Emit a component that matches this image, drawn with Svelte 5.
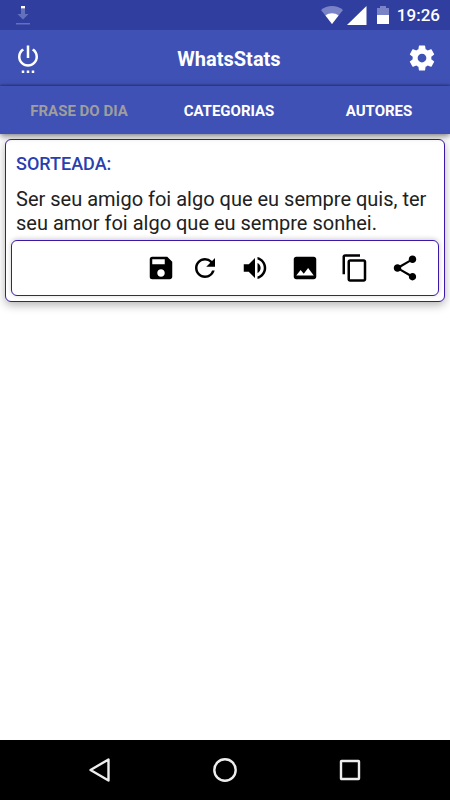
<script lang="ts">
	type Action = { id: string; label: string; path: string };

	const tabs = ['Frase do dia', 'Categorias', 'Autores'];
	let active = $state(0);

	const actions: Action[] = [
		{
			id: 'save',
			label: 'Salvar',
			path: 'M17 3H5a2 2 0 0 0-2 2v14a2 2 0 0 0 2 2h14c1.1 0 2-.9 2-2V7l-4-4zm-5 16c-1.66 0-3-1.34-3-3s1.34-3 3-3 3 1.34 3 3-1.34 3-3 3zm3-10H5V5h10v4z'
		},
		{
			id: 'refresh',
			label: 'Sortear outra',
			path: 'M17.65 6.35A7.958 7.958 0 0 0 12 4c-4.42 0-7.99 3.58-7.99 8s3.57 8 7.99 8c3.73 0 6.84-2.55 7.73-6h-2.08A5.99 5.99 0 0 1 12 18c-3.31 0-6-2.69-6-6s2.69-6 6-6c1.66 0 3.14.69 4.22 1.78L13 11h7V4l-2.35 2.35z'
		},
		{
			id: 'listen',
			label: 'Ouvir',
			path: 'M3 9v6h4l5 5V4L7 9H3zm13.5 3c0-1.77-1.02-3.29-2.5-4.03v8.05c1.48-.73 2.5-2.25 2.5-4.02zM14 3.23v2.06c2.89.86 5 3.54 5 6.71s-2.11 5.85-5 6.71v2.06c4.01-.91 7-4.49 7-8.77s-2.99-7.86-7-8.77z'
		},
		{
			id: 'image',
			label: 'Imagem',
			path: 'M21 19V5c0-1.1-.9-2-2-2H5c-1.1 0-2 .9-2 2v14c0 1.1.9 2 2 2h14c1.1 0 2-.9 2-2zM8.5 13.5l2.5 3.01L14.5 12l4.5 6H5l3.5-4.5z'
		},
		{
			id: 'copy',
			label: 'Copiar',
			path: 'M16 1H4c-1.1 0-2 .9-2 2v14h2V3h12V1zm3 4H8c-1.1 0-2 .9-2 2v14c0 1.1.9 2 2 2h11c1.1 0 2-.9 2-2V7c0-1.1-.9-2-2-2zm0 16H8V7h11v14z'
		},
		{
			id: 'share',
			label: 'Compartilhar',
			path: 'M18 16.08c-.76 0-1.44.3-1.96.77L8.91 12.7c.05-.23.09-.46.09-.7s-.04-.47-.09-.7l7.05-4.11c.54.5 1.25.81 2.04.81 1.66 0 3-1.34 3-3s-1.34-3-3-3-3 1.34-3 3c0 .24.04.47.09.7L8.04 9.81C7.5 9.31 6.79 9 6 9c-1.66 0-3 1.34-3 3s1.34 3 3 3c.79 0 1.5-.31 2.04-.81l7.12 4.16c-.05.21-.08.43-.08.65 0 1.61 1.31 2.92 2.92 2.92s2.92-1.31 2.92-2.92-1.31-2.92-2.92-2.92z'
		}
	];
</script>

<div class="screen">
	<div class="status">
		<svg class="download" width="16" height="22" viewBox="0 0 16 22" aria-hidden="true">
			<path d="M6 5h4v5h3.5L8 15.500 2.500 10H6zM1 19h14v1.500H1z" fill="#6371bd" />
			<path d="M6 2h4v2.500H6z" fill="#fff" />
		</svg>
		<div class="indicators">
			<svg width="22" height="20" viewBox="0 0 22 20" aria-hidden="true">
				<path d="M11 19 0 5C6-.5 16-.5 22 5z" fill="#7983c5" />
				<path d="M11 19 4.500 10.500C8 7.500 14 7.500 17.500 10.500z" fill="#fff" />
			</svg>
			<svg width="20" height="20" viewBox="0 0 20 20" aria-hidden="true">
				<path d="M0 20 19.500 1v19z" fill="#fff" />
			</svg>
			<svg class="battery" width="12" height="20" viewBox="0 0 12 20" aria-hidden="true">
				<path d="M3 1h6v2h3v8H0V3h3z" fill="#7983c5" />
				<path d="M0 10h12v9H0z" fill="#fff" />
			</svg>
			<span>19:26</span>
		</div>
	</div>

	<header>
		<button type="button" class="icon" aria-label="Sair">
			<svg viewBox="0 0 24 24">
				<path d="M7 24h2v-2H7v2zm4 0h2v-2h-2v2zm2-22h-2v10h2V2zm3.560 2.440l-1.450 1.450C16.840 6.940 18 8.830 18 11c0 3.310-2.690 6-6 6s-6-2.690-6-6c0-2.170 1.160-4.060 2.880-5.120L7.440 4.440C5.360 5.880 4 8.280 4 11c0 4.420 3.580 8 8 8s8-3.580 8-8c0-2.720-1.360-5.120-3.440-6.560zM15 24h2v-2h-2v2z" />
			</svg>
		</button>
		<h1>WhatsStats</h1>
		<button type="button" class="icon" aria-label="Configurações">
			<svg viewBox="0 0 24 24">
				<path d="M19.430 12.980c.04-.32.07-.64.07-.98s-.03-.66-.07-.98l2.110-1.650c.19-.15.24-.42.12-.64l-2-3.460c-.12-.22-.39-.3-.61-.22l-2.490 1c-.52-.4-1.080-.73-1.690-.98l-.38-2.650C14.460 2.180 14.250 2 14 2h-4c-.25 0-.46.18-.49.42l-.38 2.650c-.61.25-1.170.59-1.690.98l-2.490-1c-.23-.09-.49 0-.61.22l-2 3.460c-.13.22-.07.49.12.64l2.110 1.650c-.04.32-.07.65-.07.98s.03.66.07.98l-2.110 1.650c-.19.15-.24.42-.12.64l2 3.460c.12.22.39.3.61.22l2.490-1c.52.4 1.080.73 1.690.98l.38 2.650c.03.24.24.42.49.42h4c.25 0 .46-.18.49-.42l.38-2.650c.61-.25 1.170-.59 1.690-.98l2.490 1c.23.09.49 0 .61-.22l2-3.460c.12-.22.07-.49-.12-.64l-2.110-1.650zM12 15.500c-1.930 0-3.500-1.570-3.500-3.500s1.570-3.500 3.500-3.500 3.500 1.570 3.500 3.500-1.570 3.500-3.500 3.500z" />
			</svg>
		</button>
	</header>

	<nav class="tabs">
		{#each tabs as tab, i}
			<button type="button" class:active={i === active} onclick={() => (active = i)}>{tab}</button>
		{/each}
	</nav>

	<main>
		<article class="card">
			<h2>Sorteada:</h2>
			<p>Ser seu amigo foi algo que eu sempre quis, ter seu amor foi algo que eu sempre sonhei.</p>
			<div class="actions">
				{#each actions as action (action.id)}
					<button type="button" class={action.id} aria-label={action.label}>
						<svg viewBox="0 0 24 24"><path d={action.path} /></svg>
					</button>
				{/each}
			</div>
		</article>
	</main>

	<footer>
		<button type="button" aria-label="Voltar">
			<svg viewBox="0 0 24 24"><path d="M20.500 1.500v21L2.500 12z" /></svg>
		</button>
		<button type="button" aria-label="Início">
			<svg viewBox="0 0 24 24"><circle cx="12" cy="12" r="10.700" /></svg>
		</button>
		<button type="button" aria-label="Recentes">
			<svg viewBox="0 0 24 24"><rect x="3" y="3" width="18" height="18" rx="0.500" /></svg>
		</button>
	</footer>
</div>

<style>
	:global(body) {
		margin: 0;
		background: #fff;
	}
	.screen {
		display: flex;
		flex-direction: column;
		min-height: 100vh;
		font-family: Roboto, 'Noto Sans', sans-serif;
		color: #212121;
	}
	svg {
		display: block;
		flex: none;
	}
	button {
		padding: 0;
		border: none;
		background: none;
		color: inherit;
		font: inherit;
		cursor: pointer;
	}
	.status {
		display: flex;
		align-items: center;
		justify-content: space-between;
		height: 30px;
		padding: 0 10px 0 15px;
		background: #303f9f;
		color: #fff;
	}
	.indicators {
		display: flex;
		align-items: center;
		gap: 4px;
		font-size: 17px;
		font-weight: 500;
	}
	.battery {
		margin: 0 4px 0 6px;
	}
	header {
		display: flex;
		align-items: center;
		justify-content: space-between;
		height: 56px;
		padding: 0 13px;
		background: #3f51b5;
		color: #fff;
	}
	h1 {
		margin: 0;
		padding: 2px 0 0 8px;
		font-size: 20px;
		font-weight: 700;
	}
	.icon svg,
	.actions svg {
		width: 30px;
		height: 30px;
		fill: currentColor;
	}
	.tabs {
		position: relative;
		display: grid;
		grid-template-columns: repeat(3, 1fr);
		height: 48px;
		background: #3f51b5;
		box-shadow:
			0 -1px 2px rgba(0, 0, 0, 0.3),
			0 2px 6px rgba(0, 0, 0, 0.5);
	}
	.tabs button {
		padding: 2px 0 0 8px;
		color: #fff;
		font-size: 15px;
		font-weight: 700;
		text-transform: uppercase;
	}
	.tabs .active {
		color: #9e9e9e;
	}
	main {
		flex: 1;
		padding: 5px;
	}
	.card {
		padding: 13px 5px 5px;
		border: 1px solid #3c18a8;
		border-radius: 6px;
		background: #fff;
		box-shadow: 0 3px 10px rgba(0, 0, 0, 0.3);
	}
	h2 {
		margin: 0 5px 12px;
		color: #283fb0;
		font-size: 18px;
		font-weight: 500;
		line-height: 22px;
		text-transform: uppercase;
	}
	p {
		margin: 0 5px 5px;
		font-size: 20px;
		line-height: 24px;
	}
	.actions {
		display: flex;
		justify-content: flex-end;
		height: 54px;
		padding-right: 8px;
		border: 1px solid #3c18a8;
		border-radius: 6px;
		background: #fff;
		box-shadow: 0 -1px 5px rgba(0, 0, 0, 0.2);
		color: #000;
	}
	.actions button {
		display: grid;
		place-items: center;
		width: 50px;
	}
	.actions .save {
		width: 38px;
	}
	footer {
		display: flex;
		justify-content: center;
		height: 60px;
		background: #000;
	}
	footer button {
		display: grid;
		place-items: center;
		width: 125px;
	}
	footer svg {
		width: 24px;
		height: 24px;
		fill: none;
		stroke: #eee;
		stroke-width: 2.4;
		stroke-linejoin: round;
	}
</style>
